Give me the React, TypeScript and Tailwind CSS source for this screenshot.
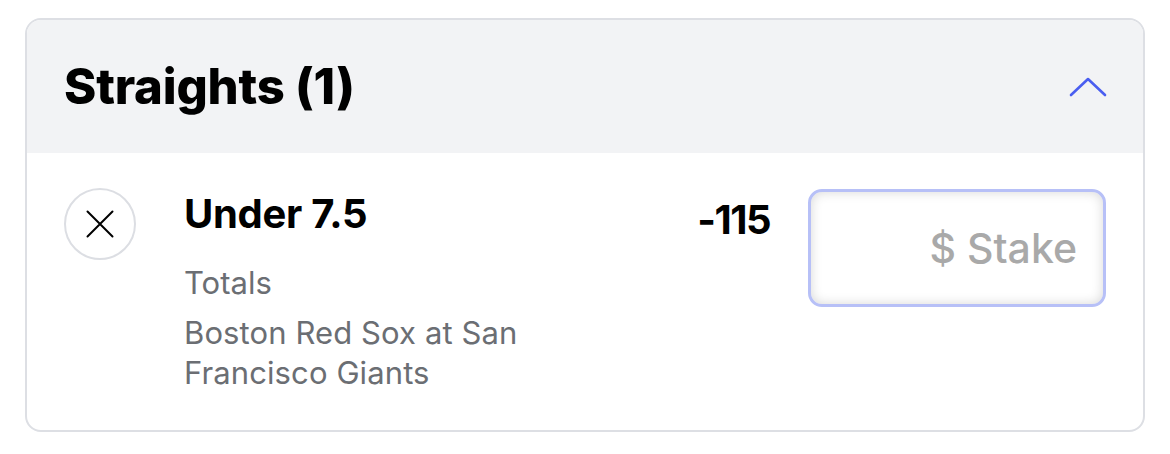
export default function App() {
  return (
    <div className="w-[1170px] h-[454px] bg-white pt-[18px] px-[25px]" style={{ fontFamily: 'Inter, "Noto Sans", sans-serif' }}>
      <div className="w-[1120px] h-[414px] rounded-[16px] border-2 border-[#dddfe4] overflow-hidden bg-white">
        <div className="h-[133px] bg-[#f2f3f5] flex items-center justify-between pl-[37px] pr-[36px]">
          <h1 className="text-[49px] font-extrabold tracking-[-0.2px] text-black leading-none">Straights (1)</h1>
          <svg width="38" height="20" viewBox="0 0 38 20" fill="none" stroke="#4a5ef0" strokeWidth="2.6" strokeLinecap="round" strokeLinejoin="round">
            <path d="M2 18 L19 2 L36 18" />
          </svg>
        </div>
        <div className="flex pl-[37px] pt-[35px] pr-[37px]">
          <button className="w-[72px] h-[72px] rounded-full border-2 border-[#dcdee3] flex items-center justify-center shrink-0">
            <svg width="28" height="28" viewBox="0 0 28 28" fill="none" stroke="#000" strokeWidth="2" strokeLinecap="round">
              <path d="M1.5 1.5 L26.5 26.5 M26.5 1.5 L1.5 26.5" />
            </svg>
          </button>
          <div className="ml-[48px] flex-1 pt-[2px]">
            <p className="text-[40px] font-bold text-black leading-[48px] tracking-[-0.3px]">Under 7.5</p>
            <p className="mt-[25px] text-[31px] text-[#6b6e73] leading-[40px]">Totals</p>
            <p className="mt-[10px] w-[380px] text-[31px] text-[#6b6e73] leading-[40px] tracking-[0.1px]">Boston Red Sox at San Francisco Giants</p>
          </div>
          <p className="pt-[8px] text-[40px] font-bold text-black leading-[48px] tracking-[-1.5px]">-115</p>
          <input
            placeholder="$ Stake"
            className="ml-[38px] mt-[1px] w-[298px] h-[118px] rounded-[14px] border-[3px] border-[#b7c0f7] bg-white text-right pr-[26px] text-[41px] font-medium placeholder:text-[#a9a9a9] shadow-[inset_0_0_12px_rgba(0,0,0,0.16)] outline-none"
          />
        </div>
      </div>
    </div>
  );
}
